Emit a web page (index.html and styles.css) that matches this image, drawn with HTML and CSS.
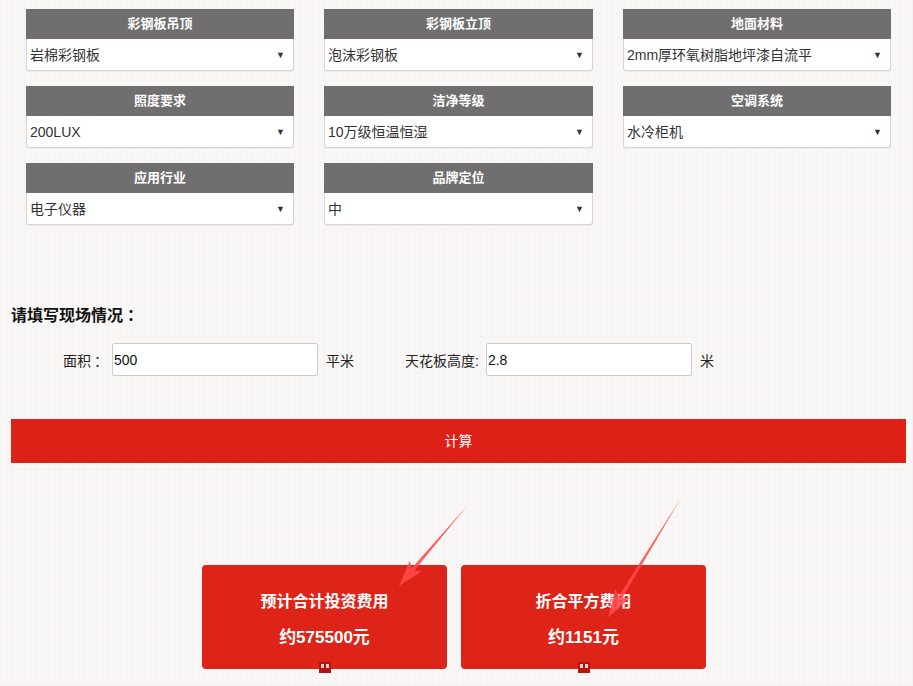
FILE: index.html
```html
<!DOCTYPE html>
<html lang="zh-CN">
<head>
<meta charset="utf-8">
<title>净化车间造价计算</title>
<link rel="stylesheet" href="styles.css">
</head>
<body>
<div class="page">
  <div class="options">
    <div class="opt">
      <div class="opt-head">彩钢板吊顶</div>
      <div class="opt-sel"><span>岩棉彩钢板</span></div>
    </div>
    <div class="opt">
      <div class="opt-head">彩钢板立顶</div>
      <div class="opt-sel"><span>泡沫彩钢板</span></div>
    </div>
    <div class="opt">
      <div class="opt-head">地面材料</div>
      <div class="opt-sel"><span>2mm厚环氧树脂地坪漆自流平</span></div>
    </div>
    <div class="opt">
      <div class="opt-head">照度要求</div>
      <div class="opt-sel"><span>200LUX</span></div>
    </div>
    <div class="opt">
      <div class="opt-head">洁净等级</div>
      <div class="opt-sel"><span>10万级恒温恒湿</span></div>
    </div>
    <div class="opt">
      <div class="opt-head">空调系统</div>
      <div class="opt-sel"><span>水冷柜机</span></div>
    </div>
    <div class="opt">
      <div class="opt-head">应用行业</div>
      <div class="opt-sel"><span>电子仪器</span></div>
    </div>
    <div class="opt">
      <div class="opt-head">品牌定位</div>
      <div class="opt-sel"><span>中</span></div>
    </div>
  </div>

  <div class="site">
    <h2 class="site-title">请填写现场情况<span class="colon">：</span></h2>
    <div class="fields">
      <span class="lbl lbl-area">面积<span class="colon">：</span></span>
      <div class="inp">500</div>
      <span class="unit unit-area">平米</span>
      <span class="lbl">天花板高度:</span>
      <div class="inp">2.8</div>
      <span class="unit">米</span>
    </div>
  </div>

  <div class="calc">计算</div>

  <div class="results">
    <div class="res">
      <div class="res-title">预计合计投资费用</div>
      <div class="res-val">约575500元</div>
      <span class="res-badge"><i></i><i></i></span>
    </div>
    <div class="res">
      <div class="res-title">折合平方费用</div>
      <div class="res-val">约1151元</div>
      <span class="res-badge"><i></i><i></i></span>
    </div>
  </div>

  <svg class="arrows" width="913" height="686" viewBox="0 0 913 686">
    <g transform="translate(467,506) rotate(130.4)">
      <polygon points="0,0 83,-1.8 79,-8 105,0 79,8 83,1.8" />
    </g>
    <g transform="translate(681,498) rotate(121.4)">
      <polygon points="0,0 116,-2 112,-8.5 140,0 112,8.5 116,2" />
    </g>
  </svg>
</div>
</body>
</html>
```
FILE: styles.css
```css
html, body {
  margin: 0;
  padding: 0;
}
body {
  background-color: #f9f6f6;
  background-image:
    repeating-linear-gradient(90deg, rgba(240,234,234,0.3) 0 1px, transparent 1px 12px),
    repeating-linear-gradient(0deg, rgba(240,234,234,0.3) 0 1px, transparent 1px 12px);
  font-family: "Liberation Sans", "Noto Sans CJK SC", sans-serif;
  color: #222;
  width: 913px;
  height: 686px;
  overflow: hidden;
}
.page {
  position: relative;
  width: 913px;
  height: 686px;
}
.options {
  display: grid;
  grid-template-columns: 268px 269px 268px;
  column-gap: 30px;
  row-gap: 15px;
  padding: 9px 0 0 26px;
}
.opt-head {
  height: 30px;
  line-height: 30px;
  background: #706e6e;
  color: #fff;
  font-weight: bold;
  font-size: 13px;
  text-align: center;
}
.opt-sel {
  position: relative;
  height: 31px;
  line-height: 32px;
  background: #fff;
  border: 1px solid #d9d3d3;
  border-top: none;
  border-radius: 0 0 3px 3px;
  box-shadow: 0 1px 1px rgba(0,0,0,0.05);
  font-size: 14px;
  color: #333;
  padding-left: 3px;
}
.opt-sel::after {
  content: "▼";
  position: absolute;
  right: 8px;
  top: 0;
  font-size: 9px;
  color: #333;
}
.site {
  margin-top: 81px;
  padding-left: 11px;
}
.site-title {
  margin: 0;
  height: 20px;
  font-size: 16px;
  line-height: 20px;
  font-weight: bold;
  color: #111;
}
.colon {
  padding-left: 4px;
}
.fields {
  display: flex;
  align-items: center;
  margin-top: 17px;
  padding-left: 52px;
  height: 33px;
  font-size: 14px;
  color: #222;
}
.lbl {
  flex-shrink: 0;
  white-space: nowrap;
  margin-right: 7px;
}
.lbl-area {
  margin-right: 4px;
}
.fields .colon {
  padding-left: 3px;
}
.inp {
  flex-shrink: 0;
  box-sizing: border-box;
  width: 206px;
  height: 33px;
  line-height: 33px;
  background: #fff;
  border: 1px solid #cfcaca;
  border-radius: 2px;
  padding-left: 1px;
  font-size: 14px;
  color: #111;
}
.unit {
  flex-shrink: 0;
  white-space: nowrap;
  margin-left: 8px;
}
.unit-area {
  margin-right: 51px;
}
.calc {
  margin: 43px 7px 0 11px;
  height: 44px;
  line-height: 44px;
  background: #dd2117;
  color: #fff;
  font-size: 14px;
  text-align: center;
}
.results {
  display: flex;
  gap: 14px;
  margin-top: 102px;
  padding-left: 202px;
}
.res {
  position: relative;
  width: 245px;
  height: 104px;
  background: #de2318;
  border-radius: 4px;
  color: #fff;
  font-weight: bold;
  font-size: 16px;
  text-align: center;
}
.res-title {
  padding-top: 26px;
  line-height: 22px;
}
.res-val {
  margin-top: 14px;
  line-height: 22px;
  font-size: 17px;
}
.res-badge {
  position: absolute;
  left: 50%;
  bottom: -4px;
  margin-left: -6px;
  width: 12px;
  height: 11px;
  background: #b8140e;
  display: flex;
  justify-content: center;
  gap: 2px;
  padding-top: 2px;
  box-sizing: border-box;
}
.res-badge i {
  display: block;
  width: 3px;
  height: 4px;
  background: #f4d0d0;
}
.arrows {
  position: absolute;
  left: 0;
  top: 0;
  pointer-events: none;
}
.arrows polygon {
  fill: #ff4a4a;
  fill-opacity: 0.88;
}
```
